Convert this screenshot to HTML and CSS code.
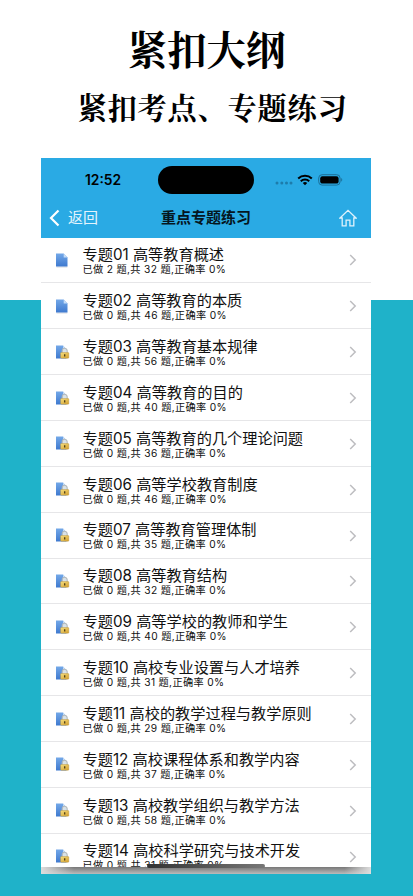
FILE: index.html
```html
<!DOCTYPE html>
<html lang="zh-CN">
<head>
<meta charset="utf-8">
<title>重点专题练习</title>
<link rel="stylesheet" href="styles.css">
</head>
<body>
<svg class="defs" aria-hidden="true">
  <defs>
    <linearGradient id="blue" x1="0" y1="0" x2="0" y2="1"><stop offset="0" stop-color="#73a8e8"/><stop offset="1" stop-color="#3e79cf"/></linearGradient>
    <linearGradient id="gold" x1="0" y1="0" x2="1" y2="1"><stop offset="0" stop-color="#f5df80"/><stop offset="1" stop-color="#d49f2c"/></linearGradient>
    <symbol id="doc" viewBox="0 0 16 16">
      <path d="M1.5 15h10.800" stroke="#c9ced6" stroke-width=".8"/>
      <path d="M1 1.600h7.700l3.800 3.800V14.500H1z" fill="url(#blue)"/>
      <path d="M8.700 1.600v3.800h3.800z" fill="#c4dcf7"/>
    </symbol>
    <symbol id="lock" viewBox="0 0 16 16">
      <path d="M1 1.600h7l3.500 3.800V14.500H1z" fill="url(#blue)"/>
      <path d="M8 1.600v3.800h3.500z" fill="#c4dcf7"/>
      <path d="M7.200 9V7a2.500 2.800 0 0 1 5 0V9" fill="#d8e2e8" stroke="#b4b9ba" stroke-width="1.100"/>
      <rect x="5.600" y="8.500" width="8.200" height="5.700" rx=".7" fill="url(#gold)" stroke="#b98f38" stroke-width=".4"/>
      <path d="M9.700 10.200v2.300" stroke="#4b3b16" stroke-width="1.300"/>
    </symbol>
    <symbol id="next" viewBox="0 0 8 12"><path d="M1.200 1l5 5-5 5" fill="none" stroke="#bdbdc0" stroke-width="1.500"/></symbol>
  </defs>
</svg>
<main class="poster">
  <h1 class="headline">紧扣大纲</h1>
  <h2 class="subhead">紧扣考点、专题练习</h2>
  <section class="phone">
    <header class="top">
      <div class="status">
        <span class="time">12:52</span>
        <span class="island"></span>
        <span class="signals">
          <svg class="dots" viewBox="0 0 18 4"><g fill="#1d7cab"><circle cx="2" cy="2" r="1.500"/><circle cx="6.800" cy="2" r="1.500"/><circle cx="11.500" cy="2" r="1.500"/><circle cx="16" cy="2" r="1.500"/></g></svg>
          <svg class="wifi" viewBox="0 0 16 12"><g fill="none" stroke="#000" stroke-width="2"><path d="M1.200 4.500a9.800 9.800 0 0 1 13.600 0"/><path d="M3.800 7.300a6 6 0 0 1 8.400 0"/></g><path d="M5.800 9.100a3.200 3.200 0 0 1 4.400 0L8 11.300z"/></svg>
          <svg class="battery" viewBox="0 0 25 12"><rect x=".7" y=".7" width="21.400" height="10.400" rx="3.400" fill="none" stroke="#1b6f98"/><rect x="2.200" y="2.200" width="18.400" height="7.400" rx="2.200"/><path d="M23.200 4.100c1.400.5 1.400 3 0 3.600z" fill="#1b6f98"/></svg>
        </span>
      </div>
      <nav class="nav">
        <a class="back"><svg viewBox="0 0 11 18"><path d="M9.500 1.500L2 9l7.500 7.500" fill="none" stroke="#fff" stroke-width="2.200"/></svg><span>返回</span></a>
        <strong class="title">重点专题练习</strong>
        <svg class="home" viewBox="0 0 18 18"><path d="M1 9L9 1.300 17 9H14.800v7.800h-3.900v-5.700H7.100v5.700H3.200V9z" fill="none" stroke="#dff2fc" stroke-width="1.300"/></svg>
      </nav>
    </header>
    <ul class="list">
      <li><svg class="file"><use href="#doc"/></svg><div class="text"><b>专题01 高等教育概述</b><small>已做 2 题,共 32 题,正确率 0%</small></div><svg class="next"><use href="#next"/></svg></li>
      <li><svg class="file"><use href="#doc"/></svg><div class="text"><b>专题02 高等教育的本质</b><small>已做 0 题,共 46 题,正确率 0%</small></div><svg class="next"><use href="#next"/></svg></li>
      <li><svg class="file"><use href="#lock"/></svg><div class="text"><b>专题03 高等教育基本规律</b><small>已做 0 题,共 56 题,正确率 0%</small></div><svg class="next"><use href="#next"/></svg></li>
      <li><svg class="file"><use href="#lock"/></svg><div class="text"><b>专题04 高等教育的目的</b><small>已做 0 题,共 40 题,正确率 0%</small></div><svg class="next"><use href="#next"/></svg></li>
      <li><svg class="file"><use href="#lock"/></svg><div class="text"><b>专题05 高等教育的几个理论问题</b><small>已做 0 题,共 36 题,正确率 0%</small></div><svg class="next"><use href="#next"/></svg></li>
      <li><svg class="file"><use href="#lock"/></svg><div class="text"><b>专题06 高等学校教育制度</b><small>已做 0 题,共 46 题,正确率 0%</small></div><svg class="next"><use href="#next"/></svg></li>
      <li><svg class="file"><use href="#lock"/></svg><div class="text"><b>专题07 高等教育管理体制</b><small>已做 0 题,共 35 题,正确率 0%</small></div><svg class="next"><use href="#next"/></svg></li>
      <li><svg class="file"><use href="#lock"/></svg><div class="text"><b>专题08 高等教育结构</b><small>已做 0 题,共 32 题,正确率 0%</small></div><svg class="next"><use href="#next"/></svg></li>
      <li><svg class="file"><use href="#lock"/></svg><div class="text"><b>专题09 高等学校的教师和学生</b><small>已做 0 题,共 40 题,正确率 0%</small></div><svg class="next"><use href="#next"/></svg></li>
      <li><svg class="file"><use href="#lock"/></svg><div class="text"><b>专题10 高校专业设置与人才培养</b><small>已做 0 题,共 31 题,正确率 0%</small></div><svg class="next"><use href="#next"/></svg></li>
      <li><svg class="file"><use href="#lock"/></svg><div class="text"><b>专题11 高校的教学过程与教学原则</b><small>已做 0 题,共 29 题,正确率 0%</small></div><svg class="next"><use href="#next"/></svg></li>
      <li><svg class="file"><use href="#lock"/></svg><div class="text"><b>专题12 高校课程体系和教学内容</b><small>已做 0 题,共 37 题,正确率 0%</small></div><svg class="next"><use href="#next"/></svg></li>
      <li><svg class="file"><use href="#lock"/></svg><div class="text"><b>专题13 高校教学组织与教学方法</b><small>已做 0 题,共 58 题,正确率 0%</small></div><svg class="next"><use href="#next"/></svg></li>
      <li><svg class="file"><use href="#lock"/></svg><div class="text"><b>专题14 高校科学研究与技术开发</b><small>已做 0 题,共 31 题,正确率 0%</small></div><svg class="next"><use href="#next"/></svg></li>
    </ul>
    <span class="indicator"></span>
    <div class="shade"></div>
  </section>
</main>
</body>
</html>
```
FILE: styles.css
```css
* { box-sizing: border-box; }
body { margin: 0; background: #fff; font-family: Inter, "Noto Sans CJK SC", sans-serif; color: #111; }
.defs { position: absolute; width: 0; height: 0; }
.poster { width: 413px; height: 896px; overflow: hidden; background: linear-gradient(#fff 300.500px, #1fb2c9 300.500px); }
.headline, .subhead { margin: 0; text-align: center; font-family: "Noto Serif CJK SC", "Source Han Serif SC", "Noto Sans CJK SC", serif; font-weight: 700; color: #000; white-space: nowrap; }
.headline { padding-top: 19px; height: 80px; font-size: 39.500px; line-height: 58px; }
.subhead { height: 77.500px; padding: 4px 0 0 12px; font-size: 29.300px; line-height: 44px; letter-spacing: .7px; }
.phone { position: relative; width: 330px; height: 716.500px; margin-left: 41px; background: #fff; overflow: hidden; display: flex; flex-direction: column; }
.top { height: 80px; flex: none; background: #2aaae4; }
.status { height: 45px; display: grid; grid-template-columns: 117px 96px 1fr; align-items: center; }
.time { padding-left: 44px; font-size: 13.800px; font-weight: 600; color: #000; }
.island { height: 28px; border-radius: 14px; background: #000; }
.signals { display: flex; align-items: center; padding-left: 21px; }
.dots { width: 18px; height: 4px; margin-top: 6px; }
.wifi { width: 16px; height: 12px; margin-left: 4px; }
.battery { width: 25px; height: 12px; margin-left: 5px; }
.nav { height: 35px; display: grid; grid-template-columns: 112px 92px 1fr; align-items: center; padding: 0 14px 5px 8px; }
.back { display: flex; align-items: center; gap: 8px; color: #e4f4fd; font-size: 15px; line-height: 20px; }
.back svg { width: 11px; height: 18px; }
.title { font-size: 15px; line-height: 20px; font-weight: 700; color: #05161f; white-space: nowrap; }
.home { width: 18px; height: 18px; justify-self: end; }
.list { list-style: none; margin: 0; padding: 0; height: 629.500px; flex: none; overflow: hidden; }
.list li { height: 45.860px; display: flex; align-items: center; border-bottom: 1px solid #e6e6e8; padding: 0 14px; }
.file { width: 16px; height: 16px; flex: none; }
.text { flex: 1; margin-left: 11.500px; white-space: nowrap; padding-top: 2.600px; }
.text b { display: block; font-size: 15.200px; font-weight: 400; line-height: 17px; }
.text small { display: block; font-size: 10.200px; line-height: 13px; letter-spacing: .34px; }
.list .next { width: 8px; height: 12px; flex: none; margin-top: 1px; }
.indicator { position: absolute; left: 106px; top: 706px; width: 118px; height: 4px; border-radius: 2px; background: linear-gradient(90deg, #333, #777); }
.shade { flex: 1; background: linear-gradient(90deg, #ddd 0, transparent 10%, transparent 92%, #ddd 100%), linear-gradient(#777, #bbb); }
```
